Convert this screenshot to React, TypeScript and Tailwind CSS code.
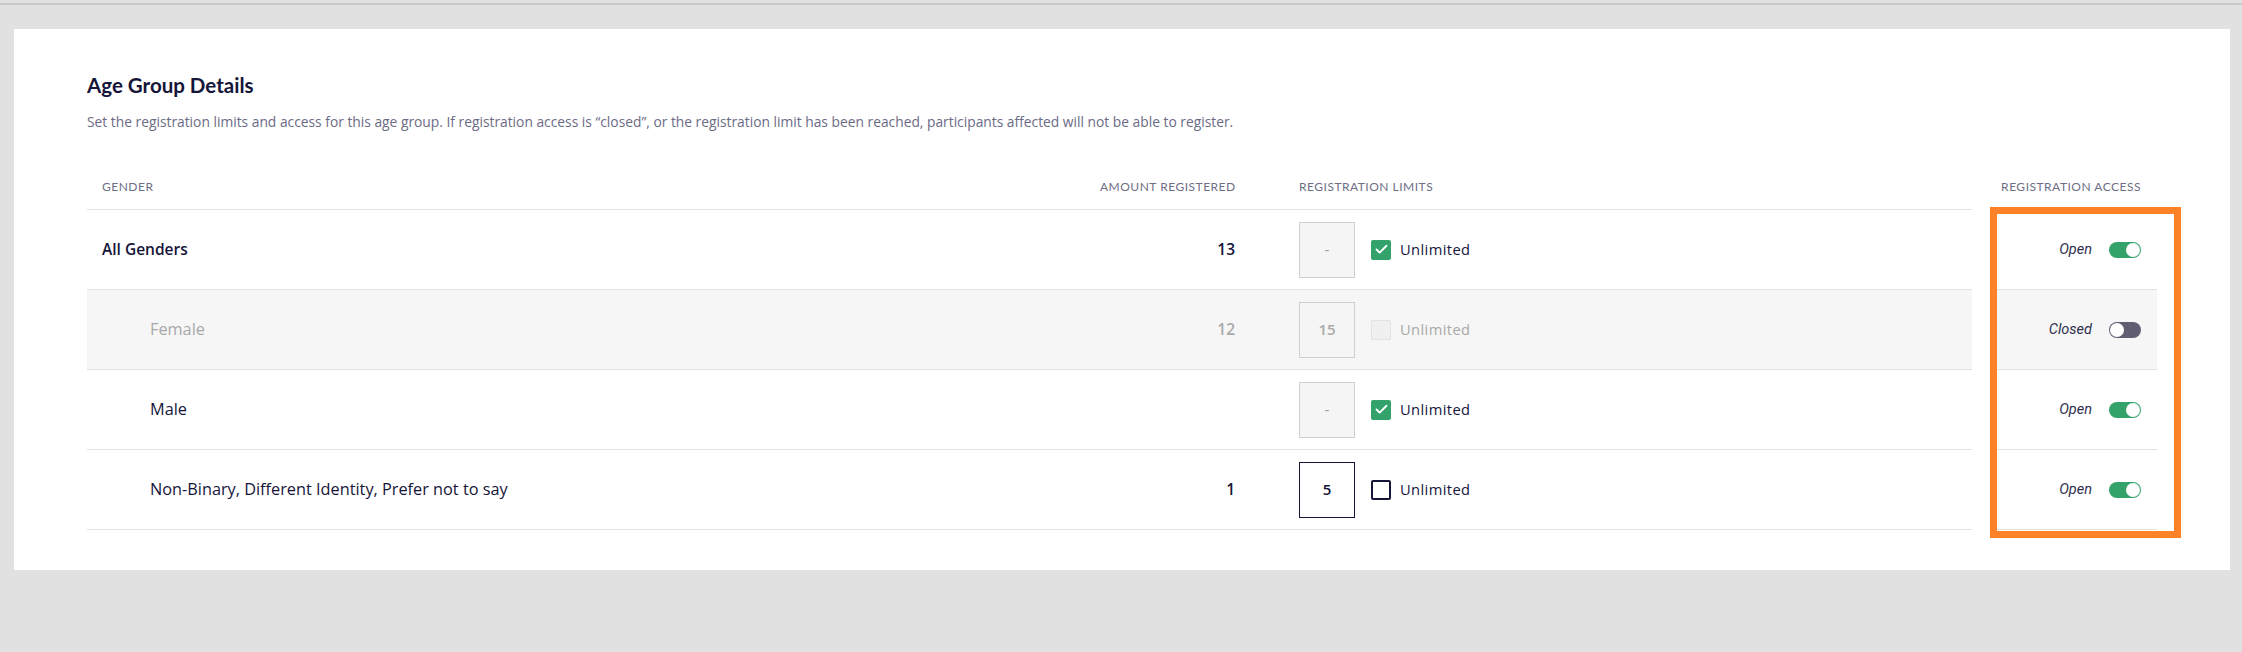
import { Check } from 'lucide-react'

type Row = {
  label: string
  sub: boolean
  amount: string
  limit: string
  unlimited: boolean
  open: boolean
  disabled?: boolean
}

const rows: Row[] = [
  { label: 'All Genders', sub: false, amount: '13', limit: '-', unlimited: true, open: true },
  { label: 'Female', sub: true, amount: '12', limit: '15', unlimited: false, open: false, disabled: true },
  { label: 'Male', sub: true, amount: '', limit: '-', unlimited: true, open: true },
  {
    label: 'Non-Binary, Different Identity, Prefer not to say',
    sub: true,
    amount: '1',
    limit: '5',
    unlimited: false,
    open: true,
  },
]

function Toggle({ on }: { on: boolean }): React.JSX.Element {
  return (
    <span
      className={`flex h-[16px] w-[32px] shrink-0 items-center rounded-full p-[1px] ${
        on ? 'justify-end bg-[#34a26b]' : 'justify-start bg-[#615d73]'
      }`}
    >
      <span className="block h-[14px] w-[14px] rounded-full bg-white" />
    </span>
  )
}

function LimitInput({ row }: { row: Row }): React.JSX.Element {
  const filled = !row.unlimited && !row.disabled
  return (
    <div
      className={`flex h-[56px] w-[56px] shrink-0 items-center justify-center border text-[15px] ${
        filled
          ? 'border-[#15153a] bg-white font-semibold text-[#15153a]'
          : row.unlimited
            ? 'border-[#cfcfcf] bg-[#f5f5f5] text-[#9a9aa5]'
            : 'border-[#cfcfcf] bg-[#f5f5f5] font-semibold text-[#a9a9a9]'
      }`}
    >
      {row.limit}
    </div>
  )
}

function Checkbox({ row }: { row: Row }): React.JSX.Element {
  if (row.unlimited) {
    return (
      <span className="flex h-[20px] w-[20px] shrink-0 items-center justify-center rounded-[2px] bg-[#34a26b]">
        <Check className="h-[15px] w-[15px] text-white" strokeWidth={3} />
      </span>
    )
  }
  if (row.disabled) {
    return <span className="block h-[20px] w-[20px] shrink-0 rounded-[2px] border border-[#e2e2e2] bg-[#f0f0f0]" />
  }
  return <span className="block h-[20px] w-[20px] shrink-0 rounded-[2px] border-2 border-[#15153a] bg-white" />
}

export default function App(): React.JSX.Element {
  return (
    <div className="min-h-[652px] bg-[#e1e1e1] pt-[3px] font-['Lato',sans-serif]">
      <div className="h-[2px] bg-[#c9c9c9]" />
      <div className="relative ml-[14px] mr-[12px] mt-[24px] bg-white px-[73px] pb-[40px] pt-[44px]">
        <h2 className="text-[20.5px] font-bold leading-[24px] text-[#15153a]">Age Group Details</h2>
        <p className="mt-[16px] font-['Open_Sans',sans-serif] text-[13.8px] leading-[18px] text-[#6b6b85]">
          Set the registration limits and access for this age group. If registration access is “closed”, or the
          registration limit has been reached, participants affected will not be able to register.
        </p>

        <div className="mt-[33px] flex h-[46px] items-center whitespace-nowrap border-b border-[#e2e2e2] text-[12px] uppercase tracking-[0.5px] text-[#6e6e85]">
          <div className="w-[1013px] pl-[15px]">Gender</div>
          <div className="w-[135px] text-right">Amount Registered</div>
          <div className="w-[364px] pl-[64px]">Registration Limits</div>
          <div className="flex-1 pr-[16px] text-right">Registration Access</div>
        </div>

        {rows.map((row) => (
          <div
            key={row.label}
            className={`flex h-[80px] items-center border-b border-[#e2e2e2] font-['Open_Sans',sans-serif] ${
              row.disabled ? 'bg-[#f6f6f6] text-[#a9a9a9]' : 'text-[#15153a]'
            }`}
          >
            <div className={`w-[1013px] ${row.sub ? 'pl-[63px] text-[16.3px]' : 'pl-[15px] text-[15.5px] font-semibold'}`}>
              {row.label}
            </div>
            <div className="w-[135px] text-right text-[15.5px] font-semibold">{row.amount}</div>
            <div className="flex w-[364px] items-center pl-[64px]">
              <LimitInput row={row} />
              <div className="ml-[16px]">
                <Checkbox row={row} />
              </div>
              <span className="ml-[9px] text-[14.7px] tracking-[0.4px]">Unlimited</span>
            </div>
            <div className="flex flex-1 items-center justify-end gap-[17px] pr-[16px]">
              <span className="font-['Roboto',sans-serif] text-[14.5px] italic text-[#2f2f4d]">
                {row.open ? 'Open' : 'Closed'}
              </span>
              <Toggle on={row.open} />
            </div>
          </div>
        ))}

        {/* white streak left by the screenshot edit */}
        <div className="absolute left-[1958px] top-[178px] h-[334px] w-[18px] bg-white" />
        {/* orange highlight box */}
        <div className="absolute left-[1976px] top-[178px] h-[331px] w-[191px] border-[7px] border-[#fd8127]" />
      </div>
    </div>
  )
}
